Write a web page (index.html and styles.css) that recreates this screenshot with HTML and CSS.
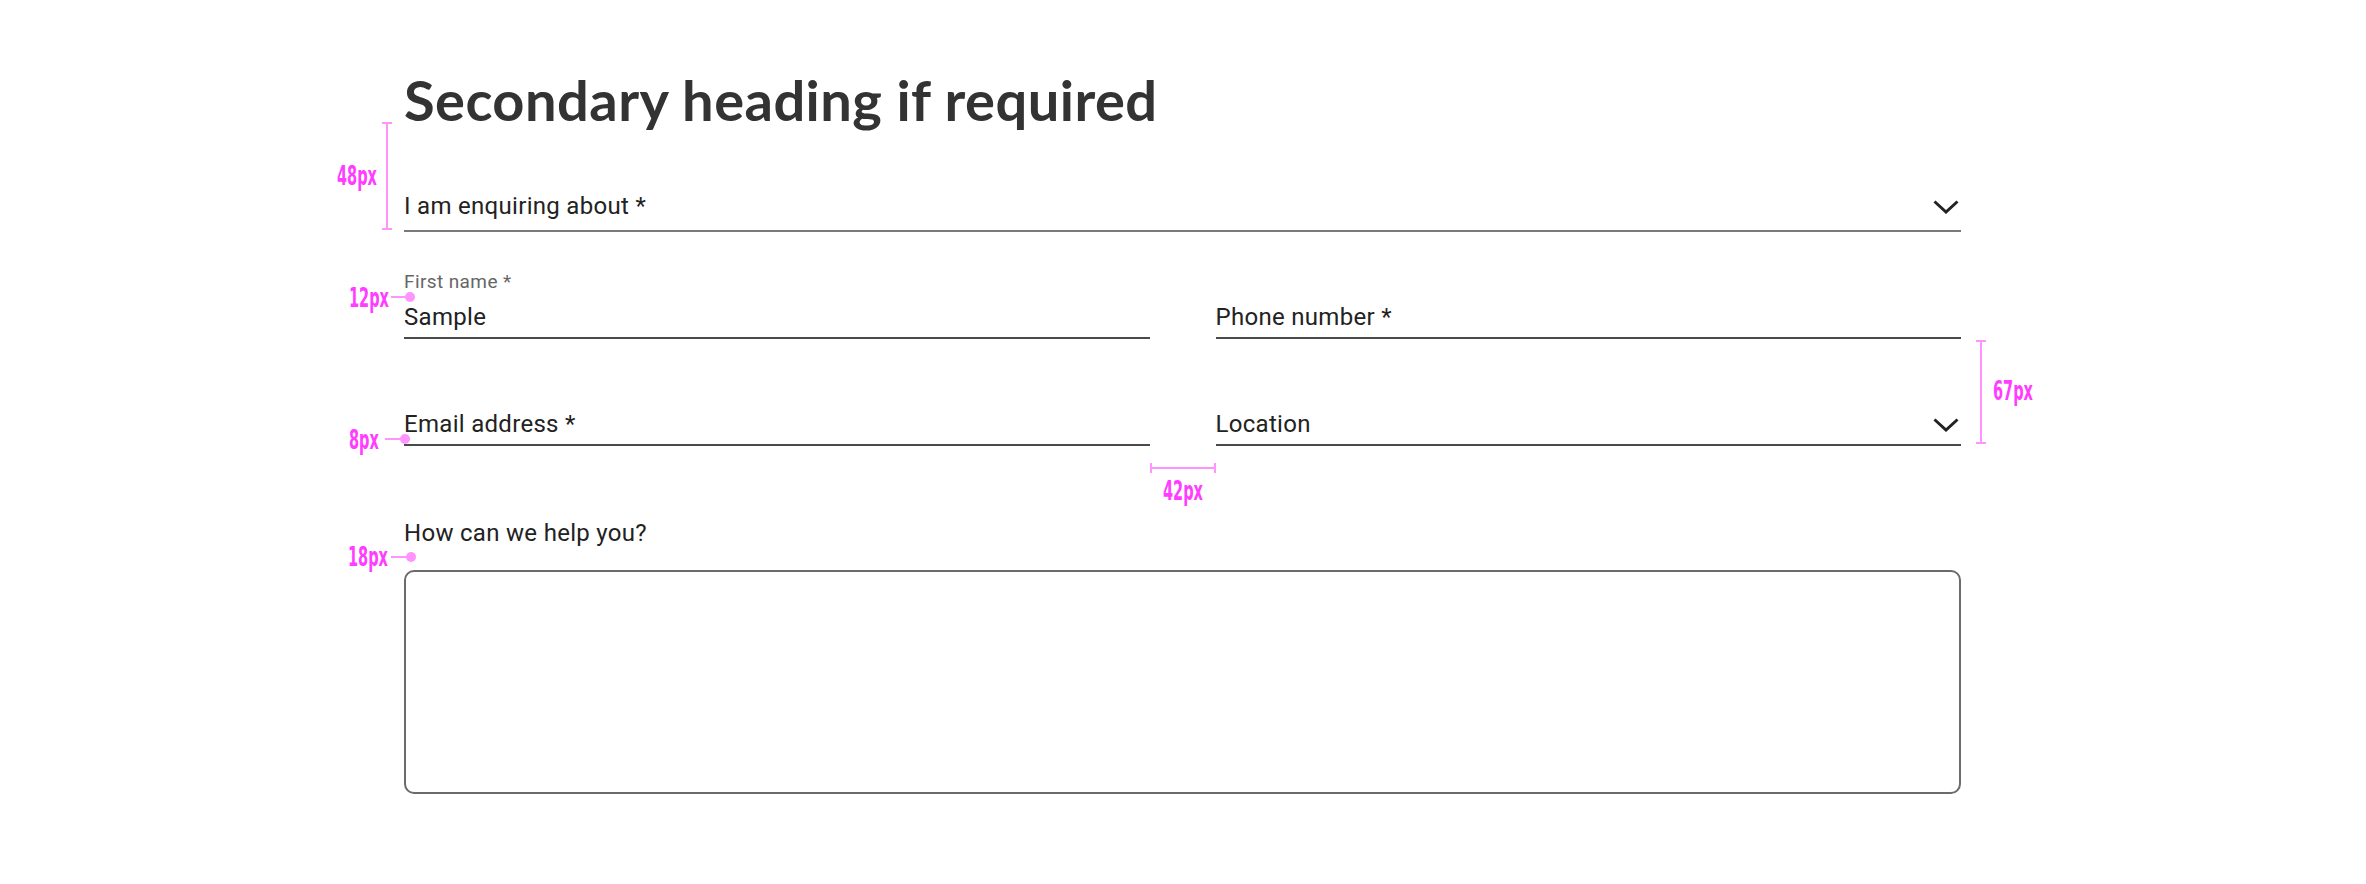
FILE: index.html
```html
<!DOCTYPE html>
<html lang="en">

<head>
    <meta charset="UTF-8">
    <meta name="viewport" content="width=device-width, initial-scale=1.0">
    <title>Enquiry form</title>
    <link rel="stylesheet" href="styles.css">
</head>

<body>
    <main class="enquiry">
        <h2 class="enquiry-title">Secondary heading if required</h2>

        <!-- 下拉选择 -->
        <div class="field field-select field-wide">
            <span class="field-value">I am enquiring about *</span>
            <svg class="chevron" width="26" height="14" viewBox="0 0 26 14"><polyline points="1.5,1.5 13,12 24.5,1.5" /></svg>
        </div>

        <div class="field-grid">
            <div class="field">
                <span class="field-label">First name *</span>
                <span class="field-value field-filled">Sample</span>
            </div>
            <div class="field">
                <span class="field-value">Phone number *</span>
            </div>
            <div class="field">
                <span class="field-value">Email address *</span>
            </div>
            <div class="field field-select">
                <span class="field-value">Location</span>
                <svg class="chevron" width="26" height="14" viewBox="0 0 26 14"><polyline points="1.5,1.5 13,12 24.5,1.5" /></svg>
            </div>
        </div>

        <label class="message-label" for="message">How can we help you?</label>
        <textarea class="message-box" id="message"></textarea>
    </main>

    <!-- 标注 -->
    <div class="notes">
        <span class="note-bar note-v" style="left:386px; top:122px; height:108px"></span>
        <span class="note-text" style="left:337px; top:163px">48px</span>

        <span class="note-text" style="left:349px; top:285px">12px</span>
        <span class="note-pin" style="left:391px; top:296px; width:19px"></span>

        <span class="note-text" style="left:349px; top:427px">8px</span>
        <span class="note-pin" style="left:385px; top:438px; width:20px"></span>

        <span class="note-bar note-h" style="left:1150px; top:467px; width:66px"></span>
        <span class="note-text" style="left:1163px; top:478px">42px</span>

        <span class="note-bar note-v" style="left:1980px; top:340px; height:104px"></span>
        <span class="note-text" style="left:1993px; top:378px">67px</span>

        <span class="note-text" style="left:348px; top:544px">18px</span>
        <span class="note-pin" style="left:391px; top:556px; width:20px"></span>
    </div>
</body>

</html>
```

FILE: styles.css
```css
/* 页面 */

body {
    margin: 0;
    background-color: #ffffff;
    color: #222222;
    font-family: Roboto, "Noto Sans", sans-serif;
}

.enquiry {
    width: 1557px;
    margin-left: 404px;
    padding-top: 66px;
}

.enquiry-title {
    margin: 0;
    font-family: Lato, "Open Sans", sans-serif;
    font-weight: 700;
    font-size: 56px;
    line-height: 67px;
    letter-spacing: 0.45px;
    color: #333333;
}
/* 输入框 */

.field {
    display: flex;
    flex-direction: column;
    padding-bottom: 5px;
    border-bottom: 2px solid #4a4a4a;
}

.field-select {
    flex-direction: row;
    align-items: center;
    justify-content: space-between;
}

.field-wide {
    margin-top: 58px;
    padding-bottom: 9px;
    border-bottom-color: #7a7a7a;
}

.field-label {
    font-size: 19px;
    line-height: 22px;
    letter-spacing: 0.4px;
    color: #666666;
}

.field-value {
    font-size: 24px;
    line-height: 30px;
    letter-spacing: 0.3px;
}

.field-filled {
    margin-top: 9px;
}

.chevron {
    margin-top: 2px;
    margin-right: 2px;
    fill: none;
    stroke: #222222;
    stroke-width: 3;
}

.field-grid {
    display: grid;
    grid-template-columns: 1fr 1fr;
    column-gap: 66px;
    row-gap: 70px;
    align-items: end;
    margin-top: 39px;
}
/* 留言 */

.message-label {
    display: block;
    margin-top: 72px;
    font-size: 24px;
    line-height: 30px;
    letter-spacing: 0.3px;
}

.message-box {
    display: block;
    box-sizing: border-box;
    width: 100%;
    height: 224px;
    margin-top: 22px;
    border: 2px solid #6b6b6b;
    border-radius: 10px;
    resize: none;
}
/* 标注 */

.notes {
    position: absolute;
    top: 0;
    left: 0;
}

.note-text {
    position: absolute;
    font-family: "DejaVu Sans Condensed", "DejaVu Sans", sans-serif;
    font-weight: 700;
    font-size: 26px;
    line-height: 26px;
    color: #ff3cff;
    transform: scaleX(0.62);
    transform-origin: left center;
}

.note-bar {
    position: absolute;
    background-color: #ff94ff;
}

.note-v {
    width: 2px;
}

.note-v::before,
.note-v::after {
    content: "";
    position: absolute;
    left: -4px;
    width: 10px;
    height: 2px;
    background-color: #ff94ff;
}

.note-v::before {
    top: 0;
}

.note-v::after {
    bottom: 0;
}

.note-h {
    height: 2px;
}

.note-h::before,
.note-h::after {
    content: "";
    position: absolute;
    top: -4px;
    width: 2px;
    height: 10px;
    background-color: #ff94ff;
}

.note-h::before {
    left: 0;
}

.note-h::after {
    right: 0;
}

.note-pin {
    position: absolute;
    height: 2px;
    background-color: #ff94ff;
}

.note-pin::after {
    content: "";
    position: absolute;
    right: -5px;
    top: -4px;
    width: 10px;
    height: 10px;
    border-radius: 50%;
    background-color: #ff94ff;
}
```
